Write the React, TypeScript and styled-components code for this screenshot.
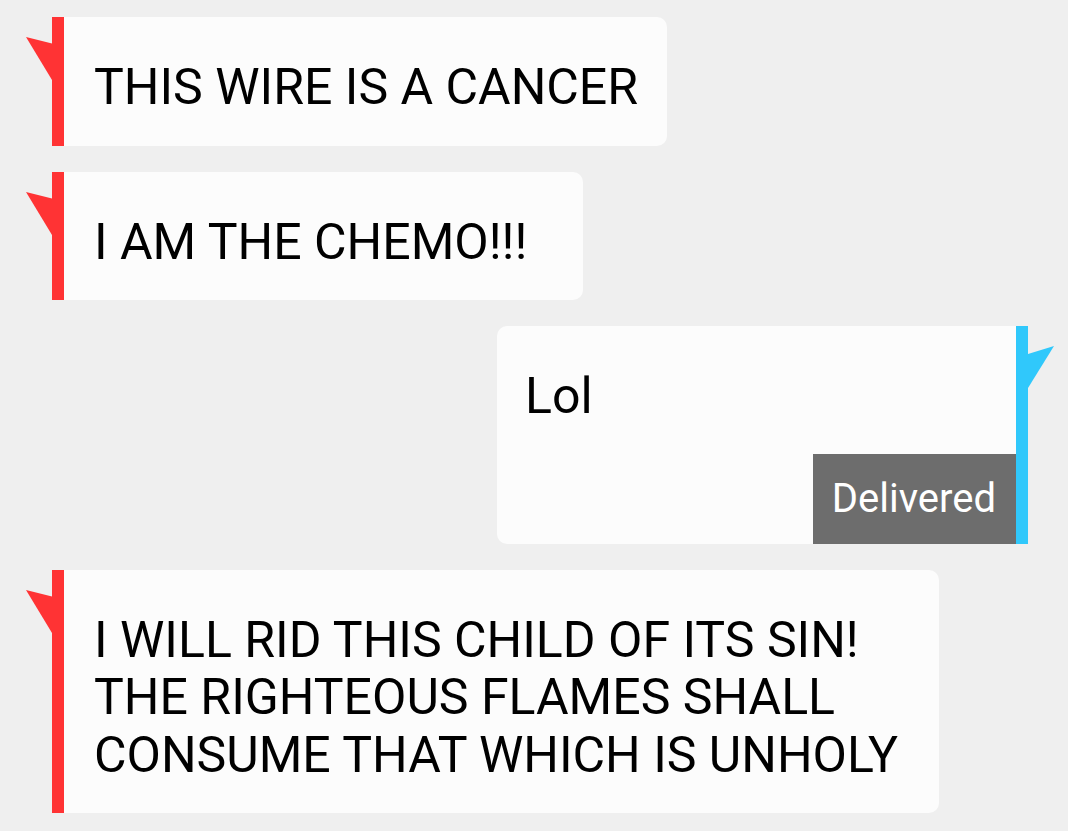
import React from "react";
import styled, { createGlobalStyle } from "styled-components";

const GlobalStyle = createGlobalStyle`
  html, body {
    margin: 0;
    padding: 0;
    background: #efefef;
  }
  body {
    font-family: Roboto, "Liberation Sans", sans-serif;
  }
`;

const colors = {
  page: "#efefef",
  bubble: "#fcfcfc",
  them: "#ff3334",
  me: "#30c8fb",
  badge: "#6d6d6d",
  text: "#000000",
};

type Side = "left" | "right";

interface Message {
  id: number;
  side: Side;
  text: string;
  width: number;
  status?: string;
}

const messages: Message[] = [
  { id: 1, side: "left", text: "THIS WIRE IS A CANCER", width: 603 },
  { id: 2, side: "left", text: "I AM THE CHEMO!!!", width: 519 },
  { id: 3, side: "right", text: "Lol", width: 519, status: "Delivered" },
  {
    id: 4,
    side: "left",
    text: "I WILL RID THIS CHILD OF ITS SIN!\nTHE RIGHTEOUS FLAMES SHALL\nCONSUME THAT WHICH IS UNHOLY",
    width: 875,
  },
];

const Tail = ({ side }: { side: Side }) => (
  <TailSvg width="26" height="64" viewBox="0 0 26 64">
    {side === "left" ? (
      <polygon points="0,20 26,26.5 26,63" fill={colors.them} />
    ) : (
      <polygon points="26,20 0,28 0,62" fill={colors.me} />
    )}
  </TailSvg>
);

const App = () => {
  return (
    <>
      <GlobalStyle />
      <Page>
        {messages.map((msg) => (
          <Row key={msg.id} $side={msg.side}>
            {msg.side === "left" && <Tail side="left" />}
            {msg.side === "left" && <Bar $side="left" />}
            <Bubble $side={msg.side} $width={msg.width}>
              <Text>{msg.text}</Text>
              {msg.status && <Badge>{msg.status}</Badge>}
            </Bubble>
            {msg.side === "right" && <Bar $side="right" />}
            {msg.side === "right" && <Tail side="right" />}
          </Row>
        ))}
      </Page>
    </>
  );
};

const Page = styled.div`
  min-height: 831px;
  box-sizing: border-box;
  padding: 17px 14px 17px 26px;
  display: flex;
  flex-direction: column;
  gap: 26px;
  background: ${colors.page};
`;

const Row = styled.div<{ $side: Side }>`
  display: flex;
  align-items: stretch;
  justify-content: ${({ $side }) => ($side === "left" ? "flex-start" : "flex-end")};
`;

const TailSvg = styled.svg`
  display: block;
  flex-shrink: 0;
`;

const Bar = styled.div<{ $side: Side }>`
  width: 12px;
  flex-shrink: 0;
  background: ${({ $side }) => ($side === "left" ? colors.them : colors.me)};
`;

const Bubble = styled.div<{ $side: Side; $width: number }>`
  width: ${({ $width }) => $width}px;
  box-sizing: border-box;
  display: flex;
  flex-direction: column;
  background: ${colors.bubble};
  border-radius: ${({ $side }) => ($side === "left" ? "0 10px 10px 0" : "10px 0 0 10px")};
  padding: ${({ $side }) => ($side === "left" ? "42px 0 29px 30px" : "42px 0 0 28px")};
`;

const Text = styled.div`
  font-size: 50px;
  line-height: 57.5px;
  white-space: pre;
  color: ${colors.text};
`;

const Badge = styled.div`
  align-self: flex-end;
  margin-top: 28px;
  height: 90px;
  display: flex;
  align-items: center;
  padding: 0 20px 0 19px;
  background: ${colors.badge};
  color: #ffffff;
  font-size: 40px;
`;

export default App;
